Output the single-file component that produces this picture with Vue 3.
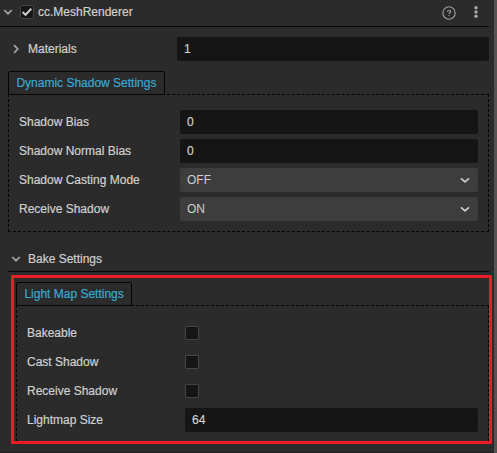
<script setup>
const shadowRows = [
  { label: 'Shadow Bias', type: 'input', value: '0' },
  { label: 'Shadow Normal Bias', type: 'input', value: '0' },
  { label: 'Shadow Casting Mode', type: 'select', value: 'OFF' },
  { label: 'Receive Shadow', type: 'select', value: 'ON' },
]
const lightRows = [
  { label: 'Bakeable', type: 'check' },
  { label: 'Cast Shadow', type: 'check' },
  { label: 'Receive Shadow', type: 'check' },
  { label: 'Lightmap Size', type: 'input', value: '64' },
]
</script>

<template>
  <div class="inspector">
    <main class="panel">
      <header class="head">
        <svg class="head-arrow" width="10" height="8" viewBox="0 0 10 8"><path d="M1.2 2 5 5.7 8.8 2" /></svg>
        <span class="check on">
          <svg width="12" height="12" viewBox="0 0 12 12"><path d="M1.6 6 4.5 8.8 10.3 2.8" /></svg>
        </span>
        <span class="title">cc.MeshRenderer</span>
        <svg class="help" width="14" height="14" viewBox="0 0 14 14">
          <circle cx="7" cy="7" r="6.2" />
          <path d="M5.4 5.8C5.4 4 8.6 4 8.6 5.7 8.6 6.8 7 6.8 7 8M7 8.9V9.9" />
        </svg>
        <svg class="more" width="4" height="12" viewBox="0 0 4 12">
          <circle cx="2" cy="1.7" r="1.7" /><circle cx="2" cy="6" r="1.7" /><circle cx="2" cy="10.3" r="1.7" />
        </svg>
      </header>

      <div class="materials">
        <svg class="mat-arrow" width="8" height="10" viewBox="0 0 8 10"><path d="M2 1.2 5.8 5 2 8.8" /></svg>
        <span class="mat-label">Materials</span>
        <div class="field">1</div>
      </div>

      <section class="group">
        <div class="tab">Dynamic Shadow Settings</div>
        <div class="box">
          <div v-for="row in shadowRows" :key="row.label" class="row">
            <span class="label">{{ row.label }}</span>
            <div class="field" :class="row.type">
              {{ row.value }}
              <svg v-if="row.type === 'select'" width="10" height="8" viewBox="0 0 10 8"><path d="M1 2.3 5 5.9 9 2.3" /></svg>
            </div>
          </div>
        </div>
      </section>

      <div class="bake">
        <svg width="10" height="8" viewBox="0 0 10 8"><path d="M1.2 2 5 5.7 8.8 2" /></svg>
        <span>Bake Settings</span>
      </div>

      <section class="highlight">
        <div class="tab">Light Map Settings</div>
        <div class="box open">
          <div v-for="row in lightRows" :key="row.label" class="row">
            <span class="label">{{ row.label }}</span>
            <span v-if="row.type === 'check'" class="check"></span>
            <div v-else class="field">{{ row.value }}</div>
          </div>
        </div>
      </section>
      <div class="end"></div>
    </main>
    <aside class="rail"></aside>
  </div>
</template>

<style>
body {
  margin: 0;
  background: #2b2b2b;
}
</style>

<style scoped>
.inspector {
  display: flex;
  width: 497px;
  height: 453px;
  overflow: hidden;
  background: #2b2b2b;
  color: #cfcfcf;
  font: 12px/24px "Liberation Sans", Arial, sans-serif;
  -webkit-text-stroke: 0.2px;
  white-space: nowrap;
}
.inspector * {
  box-sizing: border-box;
}
.panel {
  display: flex;
  flex-direction: column;
  width: 494px;
}
.rail {
  width: 3px;
  background: #555350;
}
svg {
  display: block;
  flex: none;
  fill: none;
  stroke: #a4a4a4;
  stroke-width: 1.7;
}
.head {
  display: flex;
  align-items: center;
  width: 489px;
  height: 27px;
  padding: 0 11px 2px 3px;
  border-bottom: 1px solid #050505;
}
.check {
  width: 14px;
  height: 14px;
  border: 1px solid #444444;
  border-radius: 1px;
  background: #151515;
}
.check.on {
  margin: 0 4px 0 7px;
}
.check svg {
  stroke: #cccccc;
  stroke-width: 2;
}
.title {
  flex: 1;
}
.help {
  margin: 2px 18px 0 0;
  stroke: #a0a0a0;
  stroke-width: 1.1;
}
.more {
  fill: #a8a8a8;
  stroke: none;
}
.materials {
  display: flex;
  align-items: center;
  width: 489px;
  height: 24px;
  margin-top: 10px;
  padding-left: 12px;
}
.mat-label {
  width: 149px;
  margin-left: 8px;
}
.field {
  flex: 1;
  height: 24px;
  padding-left: 7px;
  border-radius: 2px;
  background: #151515;
}
.field.select {
  display: flex;
  align-items: center;
  justify-content: space-between;
  padding-right: 8px;
  background: #3d3d3d;
  -webkit-text-stroke: 0;
}
.select svg {
  stroke: #cccccc;
}
.group {
  width: 481px;
  margin: 10px 0 0 8px;
}
.tab {
  position: relative;
  width: 157px;
  height: 24px;
  padding-left: 7.4px;
  border: 1px solid #050505;
  border-radius: 2px 2px 0 0;
  color: #38a8cf;
  line-height: 22px;
}
.box {
  display: flex;
  flex-direction: column;
  gap: 5px;
  height: 138px;
  margin-top: -1px;
  padding: 15px 10px 0;
  border: 1px dashed #050505;
}
.row {
  display: flex;
  align-items: center;
  height: 24px;
}
.label {
  width: 161px;
}
.bake {
  display: flex;
  align-items: center;
  gap: 7px;
  width: 481px;
  height: 25px;
  margin: 15px 0 0 8px;
  padding: 0 0 0 3px;
  border-bottom: 1px solid #050505;
}
.highlight {
  width: 481px;
  height: 169px;
  margin: 3px 0 0 11px;
  padding: 4px 0 0 2px;
  border: 3px solid #ed1c24;
}
.highlight .tab {
  width: 116px;
}
.highlight .box {
  width: 473px;
}
.box.open {
  height: 136px;
  padding-top: 15px;
  border-bottom: none;
}
.open .label {
  width: 158px;
}
.end {
  height: 1px;
  margin-top: 8px;
  background: #202020;
}
</style>
